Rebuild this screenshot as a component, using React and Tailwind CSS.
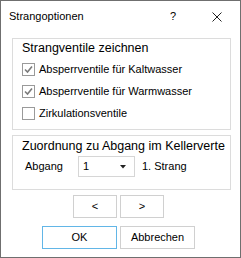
import React from 'react';

function CheckBox({ checked, label }) {
  return (
    <div className="h-[22px] flex items-center">
      <div className="w-[13px] h-[13px] border border-[#9a9a9a] bg-white flex items-center justify-center">
        {checked && (
          <svg width="9" height="9" viewBox="0 0 9 9">
            <polyline points="1,4.5 3.5,7 8,1.5" fill="none" stroke="#7b7b7b" strokeWidth="1.6" />
          </svg>
        )}
      </div>
      <span className="ml-[4px]">{label}</span>
    </div>
  );
}

function Btn({ children, w, primary }) {
  return (
    <div
      className={`h-[23px] ${w} flex items-center justify-center bg-white border ${
        primary ? 'border-[#62b6e7]' : 'border-[#d0d0d0]'
      }`}
    >
      {children}
    </div>
  );
}

export default function App() {
  return (
    <div
      className="w-[241px] h-[258px] bg-white border border-[#6f6f6f] flex flex-col text-[11px] text-black"
      style={{ fontFamily: '"Liberation Sans", Arial, sans-serif' }}
    >
      {/* Title bar */}
      <div className="h-[37px] flex items-start pt-[8px] pl-[8px] relative">
        <span className="text-[11px] leading-[14px]">Strangoptionen</span>
        <span className="absolute left-[169px] top-[8px] text-[11px] leading-[14px]">?</span>
        <svg className="absolute left-[211px] top-[11px]" width="10" height="10" viewBox="0 0 10 10">
          <path d="M0.5 0.5 L9.5 9.5 M9.5 0.5 L0.5 9.5" stroke="#222" strokeWidth="1" />
        </svg>
      </div>

      {/* Group 1 */}
      <div className="ml-[11px] w-[219px] h-[92px] border border-[#dcdcdc] pl-[9px] pb-[5px]">
        <div className="h-[18px] leading-[18px] text-[12.5px] whitespace-nowrap">Strangventile zeichnen</div>
        <div className="mt-[1px]">
          <CheckBox checked label="Absperrventile für Kaltwasser" />
          <CheckBox checked label="Absperrventile für Warmwasser" />
          <CheckBox label="Zirkulationsventile" />
        </div>
      </div>

      {/* Group 2 */}
      <div className="ml-[11px] mt-[5px] w-[219px] h-[55px] border border-[#dcdcdc]">
        <div className="h-[20px] leading-[20px] pl-[9px] text-[12.5px] whitespace-nowrap">
          Zuordnung zu Abgang im Kellerverte
        </div>
        <div className="flex items-center pl-[12px]">
          <span className="w-[53px]">Abgang</span>
          <div className="w-[57px] h-[21px] border border-[#d6d6d6] flex items-center justify-between pl-[4px] pr-[8px]">
            <span>1</span>
            <svg width="6" height="4" viewBox="0 0 6 4">
              <path d="M0 0 L6 0 L3 3.5 Z" fill="#222" />
            </svg>
          </div>
          <span className="ml-[7px]">1. Strang</span>
        </div>
      </div>

      {/* Nav buttons */}
      <div className="mt-[5px] flex pl-[72px] gap-[3px]">
        <Btn w="w-[44px]">&lt;</Btn>
        <Btn w="w-[44px]">&gt;</Btn>
      </div>

      {/* OK / Cancel */}
      <div className="mt-[8px] flex pl-[41px] gap-[3px]">
        <Btn w="w-[75px]" primary>OK</Btn>
        <Btn w="w-[75px]">Abbrechen</Btn>
      </div>
    </div>
  );
}
